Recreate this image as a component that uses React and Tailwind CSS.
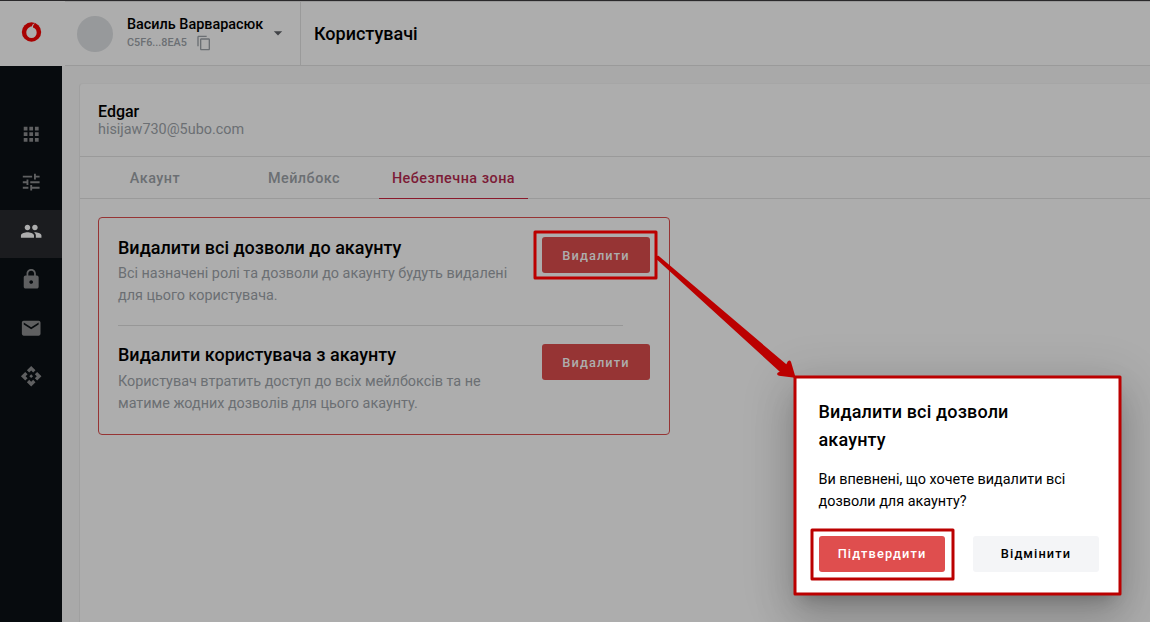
import React from "react";
import {
  MdApps,
  MdTune,
  MdPeople,
  MdLock,
  MdEmail,
  MdApi,
  MdContentCopy,
  MdArrowDropDown,
} from "react-icons/md";

const NAV = [
  { id: "apps", Icon: MdApps },
  { id: "settings", Icon: MdTune },
  { id: "users", Icon: MdPeople, active: true },
  { id: "security", Icon: MdLock },
  { id: "mail", Icon: MdEmail },
  { id: "api", Icon: MdApi },
];

function Header() {
  return (
    <header className="flex h-[66px] shrink-0 border-t border-[#2a292b]">
      <div className="flex w-[65px] shrink-0 pl-[21px] pt-[21px]">
        <svg width="21" height="20" viewBox="0 0 21 20">
          <circle cx="10.5" cy="10" r="9.7" fill="#a80202" />
          <path
            d="M11 4.300C8.800 4.700 5.300 6.700 5.300 10.700a5.200 5.200 0 0 0 10.400 0c0-2.800-1.500-4.700-3.700-5.200-.1-1.500.5-3.100 2.100-3.900-1.300-.3-2.900.800-3.100 2.700z"
            fill="#adadad"
          />
        </svg>
      </div>
      <div className="flex grow border-y border-[#9a9a9a]">
        <div className="flex w-[236px] shrink-0 border-r border-[#9a9a9a] pl-3">
          <div className="mt-[14px] size-9 shrink-0 rounded-full bg-[#97999b]" />
          <div className="ml-[14px] pt-[13px]">
            <div className="whitespace-nowrap text-[14.4px] font-medium leading-5 text-black">
              Василь Варварасюк
            </div>
            <div className="flex h-4 items-center text-[10.8px] font-medium text-[#6b6f73]">
              <span className="w-[60px]">C5F6...8EA5</span>
              <MdContentCopy className="ml-[9px] size-4" />
            </div>
          </div>
          <MdArrowDropDown className="ml-[4.5px] mt-[21px] size-5 shrink-0 text-[#414347]" />
        </div>
        <h1 className="pl-[13px] pt-[18px] text-[18px] font-medium leading-7 text-black">
          Користувачі
        </h1>
      </div>
    </header>
  );
}

function Sidebar() {
  return (
    <nav className="flex w-[62px] shrink-0 flex-col gap-[0.6px] bg-[#070b0e] pt-[47px]">
      {NAV.map(({ id, Icon, active }) => (
        <div
          key={id}
          className={
            active
              ? "flex h-12 items-center justify-center bg-[#1b1c1f] pb-[6.6px] text-[#adadad]"
              : "flex h-12 items-center justify-center pb-[6.6px] text-[#5f6061]"
          }
        >
          <Icon className="size-[22.4px]" />
        </div>
      ))}
    </nav>
  );
}

function DeleteButton() {
  return (
    <button className="h-9 w-[108px] rounded-[3px] bg-[#963434] pt-[2px] text-[12.8px] font-medium tracking-[1.1px] text-[#adadad]">
      Видалити
    </button>
  );
}

function DangerRow({ title, lines, children }) {
  return (
    <section className="flex justify-between">
      <div>
        <h2 className="text-[18px] font-medium leading-[22px] text-black">{title}</h2>
        {lines.map((line) => (
          <p
            key={line}
            className="relative top-[4px] whitespace-nowrap text-[14.4px] leading-[22px] tracking-[-0.01px] text-[#6b6f73]"
          >
            {line}
          </p>
        ))}
      </div>
      {children}
    </section>
  );
}

function UserPanel() {
  return (
    <div className="ml-[17px] mt-[17px] flex grow flex-col rounded-tl-[4px] border-l border-t border-[#a0a0a0] border-t-[#a6a6a6] bg-[#adadad]">
      <div className="h-[73px] border-b border-[#9a9a9a] pl-[18px] pt-[19px]">
        <div className="text-[16px] font-medium leading-[18px] text-black">Edgar</div>
        <div className="text-[14.4px] leading-[18px] text-[#6b6f73]">hisijaw730@5ubo.com</div>
      </div>
      <div className="flex h-[42px] border-b border-[#9a9a9a] text-[14.4px] font-medium leading-[44px] tracking-[0.48px] text-[#6b6f73]">
        <div className="w-[149px] pl-px text-center">Акаунт</div>
        <div className="w-[150px] text-center">Мейлбокс</div>
        <div className="h-[42px] w-[149px] border-b border-[#8a1a2c] text-center text-[#7c1b36]">
          Небезпечна зона
        </div>
      </div>
      <div className="ml-[18px] mt-[18px] h-[218px] w-[572px] rounded-[4px] border border-[#963434] px-[19px] pt-[19px]">
        <DangerRow
          title="Видалити всі дозволи до акаунту"
          lines={[
            "Всі назначені ролі та дозволи до акаунту будуть видалені",
            "для цього користувача.",
          ]}
        >
          <DeleteButton />
        </DangerRow>
        <div className="mb-[18px] mt-[22px] h-px w-[505px] bg-[#979797]" />
        <div className="[&_p]:top-[5px]">
          <DangerRow
            title="Видалити користувача з акаунту"
            lines={[
              "Користувач втратить доступ до всіх мейлбоксів та не",
              "матиме жодних дозволів для цього акаунту.",
            ]}
          >
            <DeleteButton />
          </DangerRow>
        </div>
      </div>
    </div>
  );
}

function ConfirmDialog() {
  return (
    <div
      role="dialog"
      className="absolute left-[795px] top-[377px] h-[217px] w-[325px] bg-white pl-[24px] pt-[21px] text-black shadow-[0_11px_15px_-7px_rgba(0,0,0,0.2),0_24px_38px_3px_rgba(0,0,0,0.14),0_9px_46px_8px_rgba(0,0,0,0.12)]"
    >
      <h2 className="-ml-[0.5px] text-[18px] font-medium leading-7 tracking-[0.16px]">
        Видалити всі дозволи
        <br />
        акаунту
      </h2>
      <p className="-ml-[0.5px] mt-[15px] whitespace-nowrap text-[14.4px] leading-[22px] tracking-[-0.005px]">
        Ви впевнені, що хочете видалити всі
        <br />
        дозволи для акаунту?
      </p>
      <div className="mt-[23px] flex gap-7 text-[12.8px] font-medium tracking-[1.1px]">
        <button className="h-9 w-[126px] rounded-[3px] bg-[#df4e4e] text-white">
          Підтвердити
        </button>
        <button className="h-9 w-[126px] rounded-[3px] bg-[#f4f5f7]">Відмінити</button>
      </div>
    </div>
  );
}

function Annotations() {
  return (
    <svg
      className="pointer-events-none absolute left-0 top-0"
      width="1150"
      height="622"
      viewBox="0 0 1150 622"
    >
      <g fill="none" stroke="#bb0000" strokeWidth="3" strokeLinejoin="round">
        <rect x="535" y="232" width="121" height="46" />
        <rect x="795" y="377" width="325" height="217" />
        <rect x="812" y="530" width="141" height="49" />
      </g>
      <path
        d="M656 256L658.500 255.800L786.300 364.300 787.700 361.500Q790.300 359 791.200 362.500L795.300 376.500Q795 378 793 377.600L779 375.800Q775.800 374.500 778 372.500L779.800 371.700 656 258.800z"
        fill="#bb0000"
      />
    </svg>
  );
}

export default function App() {
  return (
    <div className="relative flex h-[622px] w-[1150px] flex-col overflow-hidden bg-[#adadad] font-['Roboto',sans-serif]">
      <Header />
      <div className="flex grow">
        <Sidebar />
        <main className="flex grow flex-col bg-[#a9a9a9]">
          <UserPanel />
        </main>
      </div>
      <ConfirmDialog />
      <Annotations />
    </div>
  );
}
